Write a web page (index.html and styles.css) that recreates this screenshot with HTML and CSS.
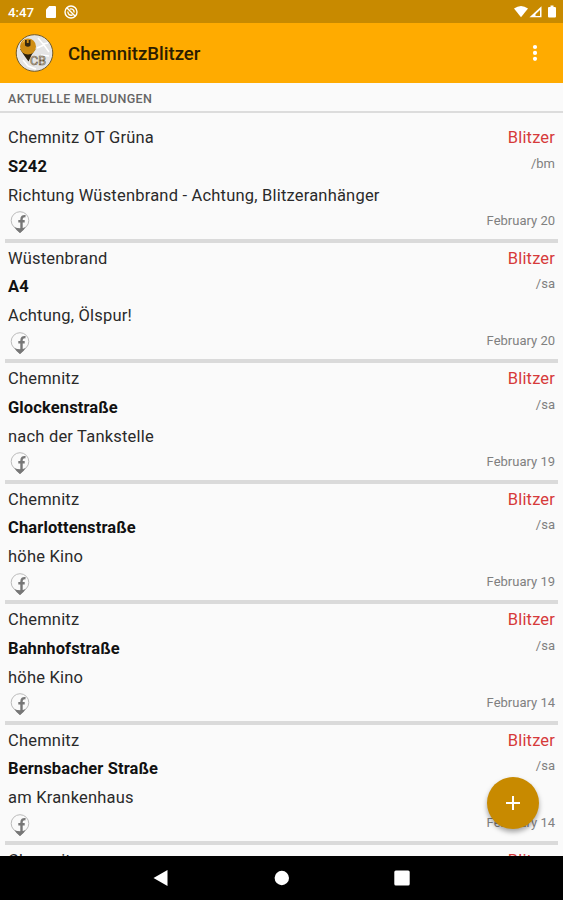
FILE: index.html
```
<!DOCTYPE html>
<html lang="de">
<head>
    <meta charset="UTF-8">
    <title>ChemnitzBlitzer</title>
    <link rel="stylesheet" href="styles.css">
</head>
<body>

<svg class="defs" width="0" height="0">
    <symbol id="pin" viewBox="0 0 20 23">
        <path d="M2.500 14Q6 19 10 22Q14 19 17.500 14L14 17H6Z" fill="#777"/>
        <circle cx="10" cy="9.500" r="8.800" fill="#fafafa" stroke="#bbb" stroke-width="1"/>
        <path d="M4.500 16.200 10 22l5.500-5.800Q10 18.500 4.500 16.200Z" fill="#777"/>
        <path d="M11.500 18V8.500q0-3.800 4-3.300M8.300 10.300h6.400" fill="none" stroke="#777" stroke-width="2.400"/>
    </symbol>
</svg>

<div class="status">
    <span class="time">4:47</span>
    <svg class="sd" width="10" height="12" viewBox="0 0 10 12"><path d="M3.2 0H9q1 0 1 1v10q0 1-1 1H1q-1 0-1-1V3.4Z" fill="#fff"/></svg>
    <svg class="sync" width="14" height="14" viewBox="0 0 14 14" fill="none" stroke="#fff">
        <circle cx="7" cy="7" r="6" stroke-width="1.400"/>
        <path d="M3 3 11 11M4 6.500a3 3 0 0 0 4.500 3.300M5.800 4.200A3 3 0 0 1 10 7.500" stroke-width="1.400"/>
    </svg>
    <svg class="signal" width="44" height="14" viewBox="0 0 44 14" fill="#fff">
        <path d="M0 3.500Q7-1.500 14 3.500L7 12.300Z"/>
        <path d="M27.500 1.200V12.300H15.500Z"/>
        <path d="M26 5v6h-4.500V9.200Z" fill="#c88a00"/>
        <path d="M36.500.5h3V2h1.300q1.200 0 1.200 1v8.500q0 1-1 1h-6q-1 0-1-1V3q0-1 1-1h1.500Z"/>
    </svg>
</div>

<div class="bar">
    <svg class="logo" width="40" height="40" viewBox="0 0 40 40">
        <circle cx="20.500" cy="20" r="18.300" fill="#e4e4e4" stroke="#6f5a2c" stroke-width="1"/>
        <path d="M24 5l5 6 5-1M23 15l7-3 5 7M9 27l5 6 8 3M27 22l8 1" fill="none" stroke="#fff" stroke-width="1.500"/>
        <path d="M6 16Q9 21 14.500 28.500Q17 22 21.500 16Z" fill="#2b200c"/>
        <circle cx="14" cy="13.500" r="8" fill="#cf8d13"/>
        <path d="M7.500 11a8 8 0 0 1 5-5q-3 4-5 5Z" fill="#f0bd58"/>
        <path d="M11 7v5.500q3 2.500 5.500 0V7h-1.800v3h-1.900V7Z" fill="#33270f"/>
        <text x="16" y="32" class="logo-text">CB</text>
    </svg>
    <h1>ChemnitzBlitzer</h1>
    <svg class="more" width="6" height="18" viewBox="0 0 6 18" fill="#fff"><circle cx="3" cy="3" r="2.100"/><circle cx="3" cy="8.900" r="2.100"/><circle cx="3" cy="14.800" r="2.100"/></svg>
</div>

<h2>AKTUELLE MELDUNGEN</h2>

<ul class="list">
    <li>
        <div class="info">
            <p>Chemnitz OT Grüna</p>
            <p class="street">S242</p>
            <p>Richtung Wüstenbrand - Achtung, Blitzeranhänger</p>
            <svg class="pin"><use href="#pin"/></svg>
        </div>
        <div class="meta"><span class="type">Blitzer</span><span class="user">/bm</span><span class="date">February 20</span></div>
    </li>
    <li>
        <div class="info">
            <p>Wüstenbrand</p>
            <p class="street">A4</p>
            <p>Achtung, Ölspur!</p>
            <svg class="pin"><use href="#pin"/></svg>
        </div>
        <div class="meta"><span class="type">Blitzer</span><span class="user">/sa</span><span class="date">February 20</span></div>
    </li>
    <li>
        <div class="info">
            <p>Chemnitz</p>
            <p class="street">Glockenstraße</p>
            <p>nach der Tankstelle</p>
            <svg class="pin"><use href="#pin"/></svg>
        </div>
        <div class="meta"><span class="type">Blitzer</span><span class="user">/sa</span><span class="date">February 19</span></div>
    </li>
    <li>
        <div class="info">
            <p>Chemnitz</p>
            <p class="street">Charlottenstraße</p>
            <p>höhe Kino</p>
            <svg class="pin"><use href="#pin"/></svg>
        </div>
        <div class="meta"><span class="type">Blitzer</span><span class="user">/sa</span><span class="date">February 19</span></div>
    </li>
    <li>
        <div class="info">
            <p>Chemnitz</p>
            <p class="street">Bahnhofstraße</p>
            <p>höhe Kino</p>
            <svg class="pin"><use href="#pin"/></svg>
        </div>
        <div class="meta"><span class="type">Blitzer</span><span class="user">/sa</span><span class="date">February 14</span></div>
    </li>
    <li>
        <div class="info">
            <p>Chemnitz</p>
            <p class="street">Bernsbacher Straße</p>
            <p>am Krankenhaus</p>
            <svg class="pin"><use href="#pin"/></svg>
        </div>
        <div class="meta"><span class="type">Blitzer</span><span class="user">/sa</span><span class="date">February 14</span></div>
    </li>
    <li>
        <div class="info">
            <p>Chemnitz</p>
        </div>
        <div class="meta"><span class="type">Blitzer</span></div>
    </li>
</ul>

<div class="nav">
    <svg width="16" height="18" viewBox="0 0 16 18"><path d="M-.5 9 13.500 1V17Z" fill="#fff"/></svg>
    <svg width="16" height="18" viewBox="0 0 16 18"><circle cx="7.800" cy="9" r="7.200" fill="#fff"/></svg>
    <svg width="16" height="18" viewBox="0 0 16 18"><rect x=".3" y="1.500" width="15.400" height="15" rx="1.500" fill="#fff"/></svg>
</div>

<div class="fab">
    <svg width="14" height="14" viewBox="0 0 14 14"><path d="M7 0V14M0 7H14" stroke="#fff" stroke-width="2"/></svg>
</div>

</body>
</html>
```
FILE: styles.css
```
html, body {
    margin: 0;
    padding: 0;
    height: 100%;
}

body {
    position: relative;
    display: flex;
    flex-direction: column;
    overflow: hidden;
    background: #fafafa;
    color: #2a2a2a;
    font-family: Roboto, "Liberation Sans", sans-serif;
}

h1, h2, p, ul {
    margin: 0;
    padding: 0;
}

.defs {
    display: none;
}

/* status bar */
.status {
    flex: none;
    display: flex;
    align-items: center;
    height: 23px;
    padding: 1px 5px 0 8px;
    box-sizing: border-box;
    background: #c88a00;
    color: #fff;
}

.time {
    width: 38px;
    font-size: 13.3px;
    font-weight: 500;
}

.sync {
    margin-left: 8px;
}

.signal {
    margin-left: auto;
}

/* app bar */
.bar {
    flex: none;
    display: flex;
    align-items: center;
    height: 60px;
    padding: 0 25px 0 14px;
    box-sizing: border-box;
    background: #ffab00;
}

.bar h1 {
    margin: 2px auto 0 14px;
    font-size: 18.6px;
    font-weight: 500;
    color: #2b1d00;
}

.logo-text {
    font-size: 12.5px;
    fill: none;
    stroke: #66512e;
    stroke-width: 0.6;
}

h2 {
    flex: none;
    height: 30px;
    padding: 1px 8px 0;
    box-sizing: border-box;
    border-bottom: 2px solid #dcdcdc;
    font-size: 12.5px;
    line-height: 29px;
    font-weight: 500;
    letter-spacing: 0.4px;
    color: #666;
}

/* reports */
.list {
    flex: 1;
    min-height: 0;
    margin: 9px 5px 0;
    overflow: hidden;
    list-style: none;
}

li {
    display: flex;
    justify-content: space-between;
    height: 120.5px;
    padding: 2px 3px 0;
    box-sizing: border-box;
    border-bottom: 4px solid #dadada;
}

.info p {
    font-size: 16.5px;
    line-height: 28.75px;
    letter-spacing: 0.2px;
}

.info .street {
    font-weight: 700;
    letter-spacing: 0.12px;
    color: #111;
}

.pin {
    display: block;
    width: 20px;
    height: 23px;
    margin: 1px 0 0 2px;
}

.meta {
    display: flex;
    flex-direction: column;
    align-items: flex-end;
    font-size: 13px;
    color: #808080;
}

.type {
    font-size: 16.5px;
    line-height: 28.75px;
    letter-spacing: 0.15px;
    color: #d63a3a;
}

.user {
    line-height: 22px;
}

.date {
    margin: auto 0 8px;
    line-height: 20px;
}

/* navigation bar */
.nav {
    flex: none;
    display: flex;
    justify-content: center;
    align-items: center;
    gap: 104px;
    height: 44px;
    background: #000;
}

.nav svg {
    overflow: visible;
}

.fab {
    position: absolute;
    left: 487px;
    top: 777px;
    display: flex;
    justify-content: center;
    align-items: center;
    width: 52px;
    height: 52px;
    border-radius: 50%;
    background: #c88a00;
    box-shadow: 0 3px 5px rgba(0, 0, 0, 0.35);
}
```
